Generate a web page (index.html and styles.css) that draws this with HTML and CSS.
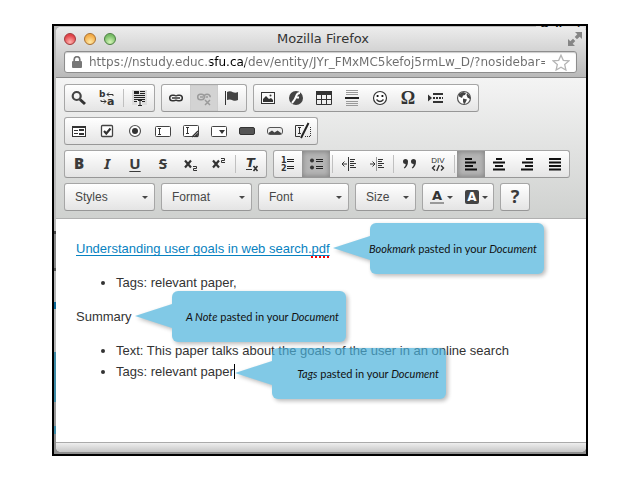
FILE: index.html
```
<!DOCTYPE html>
<html lang="en">
<head>
<meta charset="utf-8">
<title>Mozilla Firefox</title>
<link rel="stylesheet" href="styles.css">
</head>
<body>
<div class="frame">
<div class="behind" aria-hidden="true">Callout (</div>
<main class="window">
  <header class="chrome">
    <div class="titlebar">
      <div class="lights">
        <button class="light red" aria-label="Close"></button>
        <button class="light amber" aria-label="Minimize"></button>
        <button class="light green" aria-label="Zoom"></button>
      </div>
      <h1 class="title">Mozilla Firefox</h1>
      <button class="expand" aria-label="Full screen"><svg width="14" height="14" viewBox="0 0 14 14"><path d="M7 0h7v7l-2.300-2.300-2.700 2.600-2.300-2.300 2.600-2.700z M0 7l2.300 2.300 2.700-2.600 2.300 2.300-2.600 2.700 2.300 2.300H0z" fill="#858585"/></svg></button>
    </div>
    <div class="address">
      <svg width="10" height="12" viewBox="0 0 10 12"><path d="M2.200 6V3.500a2.800 2.800 0 0 1 5.600 0V6" fill="none" stroke="#777" stroke-width="1.700"/><rect y="5" width="10" height="7" rx="1" fill="#777"/></svg>
      <input class="url" type="text" aria-label="Address" value="https://nstudy.educ.sfu.ca/dev/entity/JYr_FMxMC5kefoj5rmLw_D/?nosidebar=">
      <button class="star" aria-label="Bookmark this page"><svg width="18" height="17" viewBox="0 0 18 17"><path d="M9 1.200l2.300 5.100 5.600.6-4.200 3.700 1.200 5.400L9 13.200 4.100 16l1.200-5.400L1.100 6.900l5.600-.6z" fill="#fff" stroke="#b4b4b4" stroke-width="1.300"/></svg></button>
    </div>
  </header>

  <div class="toolbar" role="toolbar" aria-label="Editor toolbar">
    <div class="row">
      <div class="group">
        <button aria-label="Find"><svg class="i" viewBox="0 0 16 16"><circle cx="5.700" cy="6" r="4" fill="none" stroke="#444" stroke-width="2.200"/><path d="M9 9.500l5 4.500" stroke="#333" stroke-width="3"/></svg></button>
        <button aria-label="Replace"><svg class="i" viewBox="0 0 16 16"><text x="0" y="7" class="t9">b</text><text x="8" y="15" class="t11">a</text><path d="M14 6V4.500H8M10 2.500L8 4.500l2 2M2 10v1.500h5M5 9.500l2 2-2 2" fill="none" stroke="#333"/></svg></button>
        <span class="sep"></span>
        <button aria-label="Select All"><svg class="i" viewBox="0 0 16 16"><path d="M0 0h15v15H0z" fill="#ddd"/><path d="M2 1h5v3H2z" fill="#222"/><path d="M8 1.500h5M8 3.500h5M2 5.500h11M2 7.500h11M2 9.500h11M2 11.500h3M10 11.500h3" stroke="#222"/><path d="M5 10h5v6H5z" fill="#eee"/><path d="M6 10.500h4M8 10.500v5M6 15.500h4" stroke="#222"/></svg></button>
      </div>
      <div class="group">
        <button aria-label="Link"><svg class="i" viewBox="0 0 16 16"><g fill="none" stroke="#333" stroke-width="1.500"><rect x="1.700" y="5.200" width="6.600" height="5.600" rx="2.800"/><rect x="7.700" y="5.200" width="6.600" height="5.600" rx="2.800"/></g><path d="M4 8h8" stroke="#fff" stroke-width="3"/><path d="M4 8h8" stroke="#333" stroke-width="1.500"/></svg></button>
        <button class="off" aria-label="Unlink" disabled><svg class="i" viewBox="0 0 16 16"><g fill="none" stroke="#333" stroke-width="1.500"><rect x="1.700" y="4.200" width="6.600" height="5.600" rx="2.800"/><path d="M8 6.500q.5-2.300 3-2.300 3 0 3.300 3"/><path d="M4 7h3M9.500 7h2.500M9 10l5 5M14 10l-5 5"/></g></svg></button>
        <button aria-label="Anchor"><svg class="i" viewBox="0 0 16 16"><path d="M1.500 1v14" stroke="#333"/><path d="M3 2q3-1.500 6 .3 2.500 1 5-.3v8q-2.500 1.500-5.500.2Q6 9 3 10z" fill="#444"/></svg></button>
      </div>
      <div class="group">
        <button aria-label="Image"><svg class="i" viewBox="0 0 16 16"><rect x="1.500" y="2.500" width="13" height="11" fill="#f8f8f8" stroke="#333"/><path d="M3 12V9l3-3 3 3 2-1 2 2v2z" fill="#333"/><circle cx="10.500" cy="5.500" r="1" fill="#333"/></svg></button>
        <button aria-label="Flash"><svg class="i" viewBox="0 0 16 16"><circle cx="8" cy="8" r="7" fill="#444"/><path d="M12 3q-3 0-4 3.500T4 13M7 7.500h4" fill="none" stroke="#fff" stroke-width="2"/></svg></button>
        <button aria-label="Table"><svg class="i" viewBox="0 0 16 16"><path d="M0 1h16v4H0z" fill="#333"/><path d="M.5 5v9.500h15V5M.5 9.500h15M5.500 5v9.500M10.500 5v9.500" fill="none" stroke="#333"/></svg></button>
        <button aria-label="Horizontal Line"><svg class="i" viewBox="0 0 16 16"><path d="M2 .5h12M2 2.500h12M2 4.500h12M2 11.500h12M2 13.500h12M2 15.500h12" stroke="#999"/><path d="M1 7h14v2H1z" fill="#222"/></svg></button>
        <button aria-label="Smiley"><svg class="i" viewBox="0 0 16 16"><circle cx="8" cy="8" r="6.500" fill="#fff" stroke="#333" stroke-width="1.200"/><circle cx="5.600" cy="6" r="1.100"/><circle cx="10.400" cy="6" r="1.100"/><path d="M4.500 9.500q3.500 4 7 0" fill="none" stroke="#333" stroke-width="1.300"/></svg></button>
        <button aria-label="Special Character"><svg class="i" viewBox="0 0 16 16"><text x="8" y="14" text-anchor="middle" class="omega">Ω</text></svg></button>
        <button aria-label="Page Break"><svg class="i" viewBox="0 0 16 16"><path d="M0 4.500l4 3.500-4 3.500z" fill="#333"/><path d="M5 3h10v2H5zM5 11h10v2H5z" fill="#333"/><path d="M5 8h2M8 8h2M11 8h2M14 8h1" stroke="#333" stroke-width="2"/></svg></button>
        <button aria-label="IFrame"><svg class="i" viewBox="0 0 16 16"><circle cx="8" cy="8" r="6.500" fill="#fff" stroke="#555" stroke-width="1.200"/><path d="M3 4l4-2 3 1-1 2-2 .5L6 8 3 6.500zM7 8.500l4 1-1.500 3-1.500 2-1-3zM11 3l3 3v3l-2.500-1.500L10.500 5z" fill="#444"/></svg></button>
      </div>
    </div>

    <div class="row">
      <div class="group">
        <button aria-label="Form"><svg class="i" viewBox="0 0 16 16"><rect x="1.500" y="3.500" width="13" height="10" fill="#fff" stroke="#333"/><path d="M1 3h14v2H1z" fill="#333"/><path d="M3 7.500h4M3 10.500h4" stroke="#333" /><path d="M8 6h5v2H8zM8 10h5v2H8z" fill="#333"/></svg></button>
        <button aria-label="Checkbox"><svg class="i" viewBox="0 0 16 16"><rect x="2.500" y="2.500" width="11" height="11" rx="1" fill="#fff" stroke="#444" stroke-width="1.300"/><path d="M5 8l2.300 2.500L11.500 5.500" fill="none" stroke="#333" stroke-width="2.200"/></svg></button>
        <button aria-label="Radio Button"><svg class="i" viewBox="0 0 16 16"><circle cx="8" cy="8" r="5.500" fill="#fff" stroke="#555" stroke-width="1.200"/><circle cx="8" cy="8" r="3" fill="#333"/></svg></button>
        <button aria-label="Text Field"><svg class="i" viewBox="0 0 16 16"><rect x=".5" y="3.500" width="15" height="10" rx="1" fill="#fff" stroke="#444"/><path d="M3 5.500h3M4.500 5.500v6M3 11.500h3" stroke="#333"/></svg></button>
        <button aria-label="Textarea"><svg class="i" viewBox="0 0 16 16"><rect x=".5" y="2.500" width="15" height="11" rx="1" fill="#fff" stroke="#444"/><path d="M3 4.500h3M4.500 4.500v6M3 10.500h3" stroke="#333"/><path d="M9 14l6-6M11.500 14l3.500-3.500M13.500 14l1.500-1.500" stroke="#333" stroke-width="1.400"/></svg></button>
        <button aria-label="Selection Field"><svg class="i" viewBox="0 0 16 16"><rect x=".5" y="3.500" width="15" height="10" rx="1" fill="#fff" stroke="#444"/><path d="M8 7h6l-3 4z" fill="#333"/></svg></button>
        <button aria-label="Button"><svg class="i" viewBox="0 0 16 16"><rect x=".5" y="4.500" width="15" height="7" rx="1.500" fill="#555" stroke="#333"/></svg></button>
        <button aria-label="Image Button"><svg class="i" viewBox="0 0 16 16"><rect x=".5" y="4.500" width="15" height="7" rx="2.500" fill="#eee" stroke="#555"/><path d="M2 11V9.500L5 7.500l2.500 2 3-2 3.500 2.500v1z" fill="#444"/></svg></button>
        <button aria-label="Hidden Field"><svg class="i" viewBox="0 0 16 16"><path d="M9 2.500H.5v11H5" fill="none" stroke="#333"/><path d="M10 13.500h5.500V3" fill="none" stroke="#333" stroke-dasharray="1 1"/><path d="M3 4.500h3M4.500 4.500v6M3 10.500h3" stroke="#333"/><path d="M13.500 0L6 15" stroke="#222" stroke-width="2"/></svg></button>
      </div>
    </div>

    <div class="row">
      <div class="group">
        <button class="face" aria-label="Bold"><b>B</b></button>
        <button class="face" aria-label="Italic"><em>I</em></button>
        <button class="face" aria-label="Underline"><u>U</u></button>
        <button class="face" aria-label="Strikethrough"><s>S</s></button>
        <button aria-label="Subscript"><svg class="i" viewBox="0 0 16 16"><path d="M2 4.500l6 7M8 4.500l-6 7" stroke="#333" stroke-width="2.200"/><path d="M10 10.500h3.500v2h-3v2H14" fill="none" stroke="#333"/></svg></button>
        <button aria-label="Superscript"><svg class="i" viewBox="0 0 16 16"><path d="M2 4.500l6 7M8 4.500l-6 7" stroke="#333" stroke-width="2.200"/><path d="M10 2.500h3.500v2h-3v2H14" fill="none" stroke="#333"/></svg></button>
        <span class="sep"></span>
        <button aria-label="Remove Format"><svg class="i" viewBox="0 0 16 16"><text x="2" y="11" class="t13 it">T</text><path d="M9.500 10l4 5M13.500 10l-4 5" stroke="#333" stroke-width="1.600"/><path d="M2 13.500h6" stroke="#333"/></svg></button>
      </div>
      <div class="group">
        <button aria-label="Numbered List"><svg class="i" viewBox="0 0 16 16"><text x="1" y="7" class="t8">1</text><text x="1" y="15" class="t8">2</text><path d="M7 3.500h7M7 5.500h7M7 10.500h7M7 12.500h7" stroke="#222"/></svg></button>
        <button class="on" aria-label="Bulleted List" aria-pressed="true"><svg class="i" viewBox="0 0 16 16"><circle cx="4" cy="4.500" r="2" fill="#333"/><circle cx="4" cy="11.500" r="2" fill="#333"/><path d="M8 3.500h7M8 5.500h7M8 10.500h7M8 12.500h7" stroke="#222"/></svg></button>
        <span class="sep"></span>
        <button aria-label="Decrease Indent"><svg class="i" viewBox="0 0 16 16"><path d="M7.500 1v14" stroke="#333"/><path d="M9 3.500h5M9 5.500h4M9 7.500h6M9 9.500h4M9 11.500h6M1 8h5M3.500 5.500L1 8l2.500 2.500" fill="none" stroke="#333"/></svg></button>
        <button aria-label="Increase Indent"><svg class="i" viewBox="0 0 16 16"><path d="M7.500 1v14" stroke="#999"/><path d="M9 3.500h5M9 5.500h4M9 7.500h6M9 9.500h4M9 11.500h6M1 8h5M3.500 5.500L6 8l-2.500 2.500" fill="none" stroke="#333"/></svg></button>
        <span class="sep"></span>
        <button aria-label="Block Quote"><svg class="i" viewBox="0 0 16 16"><path d="M1 5.500a2.500 2.500 0 1 1 5 0Q6 10 2.500 12.500l-.7-.8Q4 9.500 3.700 8 1 8 1 5.500zM9 5.500a2.500 2.500 0 1 1 5 0q0 4.500-3.500 7l-.7-.8Q12 9.500 11.700 8 9 8 9 5.500z" fill="#333"/></svg></button>
        <button aria-label="Create Div Container"><svg class="i" viewBox="0 0 16 16"><text x="8" y="7" text-anchor="middle" class="div">DIV</text><path d="M5 9.500L2.500 12 5 14.500M11 9.500l2.500 2.500-2.500 2.500M9.300 9l-2.600 6" fill="none" stroke="#333" stroke-width="1.400"/></svg></button>
        <span class="sep"></span>
        <button class="on" aria-label="Align Left" aria-pressed="true"><svg class="i" viewBox="0 0 16 16"><path d="M2 3h7M2 6.500h11M2 10h8M2 13.500h12" stroke="#111" stroke-width="2"/></svg></button>
        <button aria-label="Center"><svg class="i" viewBox="0 0 16 16"><path d="M5 3h6M2 6.500h12M4 10h8M2 13.500h12" stroke="#111" stroke-width="2"/></svg></button>
        <button aria-label="Align Right"><svg class="i" viewBox="0 0 16 16"><path d="M7 3h7M3 6.500h11M6 10h8M2 13.500h12" stroke="#111" stroke-width="2"/></svg></button>
        <button aria-label="Justify"><svg class="i" viewBox="0 0 16 16"><path d="M2 3h12M2 6.500h12M2 10h12M2 13.500h12" stroke="#111" stroke-width="2"/></svg></button>
      </div>
    </div>

    <div class="row">
      <div class="combo"><select aria-label="Styles"><option>Styles</option></select></div>
      <div class="combo"><select aria-label="Format"><option>Format</option></select></div>
      <div class="combo"><select aria-label="Font"><option>Font</option></select></div>
      <div class="combo small"><select aria-label="Size"><option>Size</option></select></div>
      <div class="group">
        <button class="menu" aria-label="Text Color"><svg class="i" viewBox="0 0 16 16"><text x="8" y="11" text-anchor="middle" class="t13">A</text><path d="M1 13h14v2H1z" fill="#999"/></svg></button>
        <button class="menu" aria-label="Background Color"><svg class="i" viewBox="0 0 16 16"><rect x="1" y="1" width="14" height="14" rx="2" fill="#444"/><text x="8" y="12" text-anchor="middle" class="t12 inv">A</text></svg></button>
      </div>
      <div class="group">
        <button class="help" aria-label="About">?</button>
      </div>
    </div>
  </div>

  <article class="editor">
    <p><a class="doc" href="#">Understanding user goals in web search.<span class="typo">pdf</span></a></p>
    <ul><li>Tags: relevant paper,</li></ul>
    <p>Summary</p>
    <ul>
      <li>Text: This paper talks about the goals of the user in an online search</li>
      <li>Tags: relevant paper<span class="caret"></span></li>
    </ul>
    <aside class="callout bookmark"><span class="bubble"></span><p><i>Bookmark</i> pasted in your <i>Document</i></p></aside>
    <aside class="callout note"><span class="bubble"></span><p><i>A Note</i> pasted in your <i>Document</i></p></aside>
    <aside class="callout tags"><span class="bubble"></span><p><i>Tags</i> pasted in your <i>Document</i></p></aside>
  </article>
  <footer class="status"></footer>
</main>
</div>
</body>
</html>
```
FILE: styles.css
```
* { box-sizing: border-box; }
body { margin: 0; padding: 24px 52px; background: #fff; font-family: "Liberation Sans", Arial, sans-serif; }
button { margin: 0; padding: 0; border: 0; background: none; font: inherit; color: inherit; }
svg { display: block; }

.frame {
  position: relative;
  border: 2px solid #000;
  padding: 1px 0 2px 2px;
  background: linear-gradient(#b9b9b9 0 205px, #444 205px 208px, #8a8a8a 208px 242px, #555 242px 245px, #b5b5b5 245px 276px, #0b6a99 276px 283px, #b5b5b5 283px 326px, #3f8ca8 326px 376px, #999 376px 400px, #3f8ca8 400px 408px, #8f8f8f 408px);
}
.behind {
  position: absolute; top: 0; right: 0; width: 50px; height: 3px; overflow: hidden;
  font: bold 12px/8px "Liberation Sans", sans-serif; background: #ddd; color: #111; padding-left: 4px;
}
.window { position: relative; border-radius: 5px; overflow: hidden; background: #fff; }

.chrome { padding: 0 9px 4px 8px; background: linear-gradient(#ececec, #b9b9b9); border-bottom: 1px solid #8a8a8a; }
.titlebar { display: grid; grid-template-columns: 1fr auto 1fr; align-items: center; height: 24px; margin-right: -5px; }
.lights { display: flex; gap: 8px; }
.light { width: 12px; height: 12px; border-radius: 50%; border: 1px solid; }
.red { background: radial-gradient(circle at 50% 80%, #ffb3ae, #e2444a 70%); border-color: #a1383a; }
.amber { background: radial-gradient(circle at 50% 80%, #ffe9a5, #f3ac48 70%); border-color: #a9702f; }
.green { background: radial-gradient(circle at 50% 80%, #d5f5b8, #77bd66 70%); border-color: #4c7f42; }
.title { margin: 0; font: 13px/20px "DejaVu Sans", "Noto Sans", sans-serif; color: #333; }
.expand { justify-self: end; }
.address {
  display: flex; align-items: center; height: 22px; padding: 0 6px 0 7px; gap: 7px;
  background: #fff; border: 1px solid #8d8d8d; border-radius: 3px; box-shadow: inset 0 1px 1px #ccc;
}
.url {
  flex: 1; min-width: 0; height: 20px; padding: 0; border: 0; outline: 0;
  font: 12px/20px "DejaVu Sans", "Noto Sans", sans-serif;
  background: linear-gradient(90deg, #6c6c6c 121px, #000 121px 156px, #6c6c6c 156px);
  -webkit-background-clip: text; background-clip: text; -webkit-text-fill-color: transparent;
}

.toolbar {
  display: flex; flex-direction: column; gap: 5px; padding: 6px 8px 7px;
  background: linear-gradient(#f4f4f4, #cfd1cf); border-bottom: 1px solid #b0b0b0;
}
.row { display: flex; gap: 6px; }
.group, .combo {
  display: flex; align-items: center; height: 28px; border: 1px solid #a6a6a6; border-bottom-color: #979797;
  border-radius: 3px; background: linear-gradient(#fff, #e4e4e4); overflow: hidden;
}
.group button { display: flex; align-items: center; justify-content: center; width: 28px; height: 26px; }
.group .on { background: #b5b5b5; box-shadow: inset 0 0 5px 1px #858585; }
.group .off { background: #d3d3d3; box-shadow: inset 0 0 1px #999; }
.off .i { opacity: .35; }
.sep { width: 1px; height: 18px; margin: 0 2px; background: #c0c0c0; }
.i { width: 16px; height: 16px; overflow: visible; }
.i text { font-family: "DejaVu Sans", sans-serif; font-weight: bold; fill: #333; }
.i .t8 { font-size: 8px; }
.i .t9 { font-size: 9px; }
.i .t11 { font-size: 11px; }
.i .t12 { font-size: 12px; }
.i .t13 { font-size: 13px; }
.i .it { font-style: italic; }
.i .inv { fill: #fff; }
.i .omega { font-size: 18px; font-family: "Liberation Serif", serif; }
.i .div { font-size: 8px; font-family: "Liberation Sans", sans-serif; font-weight: normal; }
.group .face { font: bold 15px/20px "Noto Sans", sans-serif; color: #3a3a3a; padding-bottom: 2px; }
.face u { text-underline-offset: 2px; text-decoration-thickness: 1px; }
.group .menu { width: 35px; gap: 2px; }
.menu::after, .combo::after { content: ""; border: 3px solid transparent; border-top-color: #474747; border-bottom: 0; }
.group .help { font: bold 18px/20px "Noto Sans", sans-serif; color: #3a3a3a; padding-bottom: 2px; }
.combo { position: relative; width: 91px; }
.combo.small { width: 61px; }
.combo select {
  flex: 1; min-width: 0; height: 26px; padding: 0 0 0 10px; border: 0; background: none; appearance: none;
  font: 12px/26px "Liberation Sans", Arial, sans-serif; color: #474747;
}
.combo::after { position: absolute; right: 6px; top: 12px; pointer-events: none; }

.editor { position: relative; min-height: 223px; padding: 19px 20px; font-size: 13px; line-height: 21px; color: #333; }
.editor > p { margin: 0 0 13px; }
.editor ul { margin: 0 0 13px; padding-left: 40px; }
.doc { color: #0782c1; text-decoration: underline; text-decoration-skip-ink: none; text-underline-offset: 2px; }
.typo { text-decoration: underline dotted #f00 2px; text-decoration-skip-ink: none; text-underline-offset: 3px; }
.caret { display: inline-block; width: 1px; height: 15px; background: #000; vertical-align: -3px; }

.callout {
  position: absolute; display: flex; align-items: center; justify-content: flex-end;
  width: 174px; height: 51px; padding-right: 7px;
  font: 11px/16px Lato, "Liberation Sans", sans-serif; color: #111; white-space: nowrap;
}
.bubble {
  position: absolute; inset: 0; border-radius: 6px; background: #4ab2dc; opacity: .69;
  filter: drop-shadow(2px 2px 2px rgba(0, 0, 0, .4));
}
.bubble::before {
  content: ""; position: absolute; left: -37px; top: 13px; width: 37px; height: 24px;
  background: #4ab2dc; clip-path: polygon(0 50%, 100% 0, 100% 100%);
}
.callout p { margin: 0; position: relative; }
.bookmark { left: 314px; top: 4px; }
.note { left: 116px; top: 72px; }
.tags { left: 216px; top: 129px; }

.status { height: 10px; background: linear-gradient(#eee, #c6c6c6); border-top: 1px solid #aaa; }
```
